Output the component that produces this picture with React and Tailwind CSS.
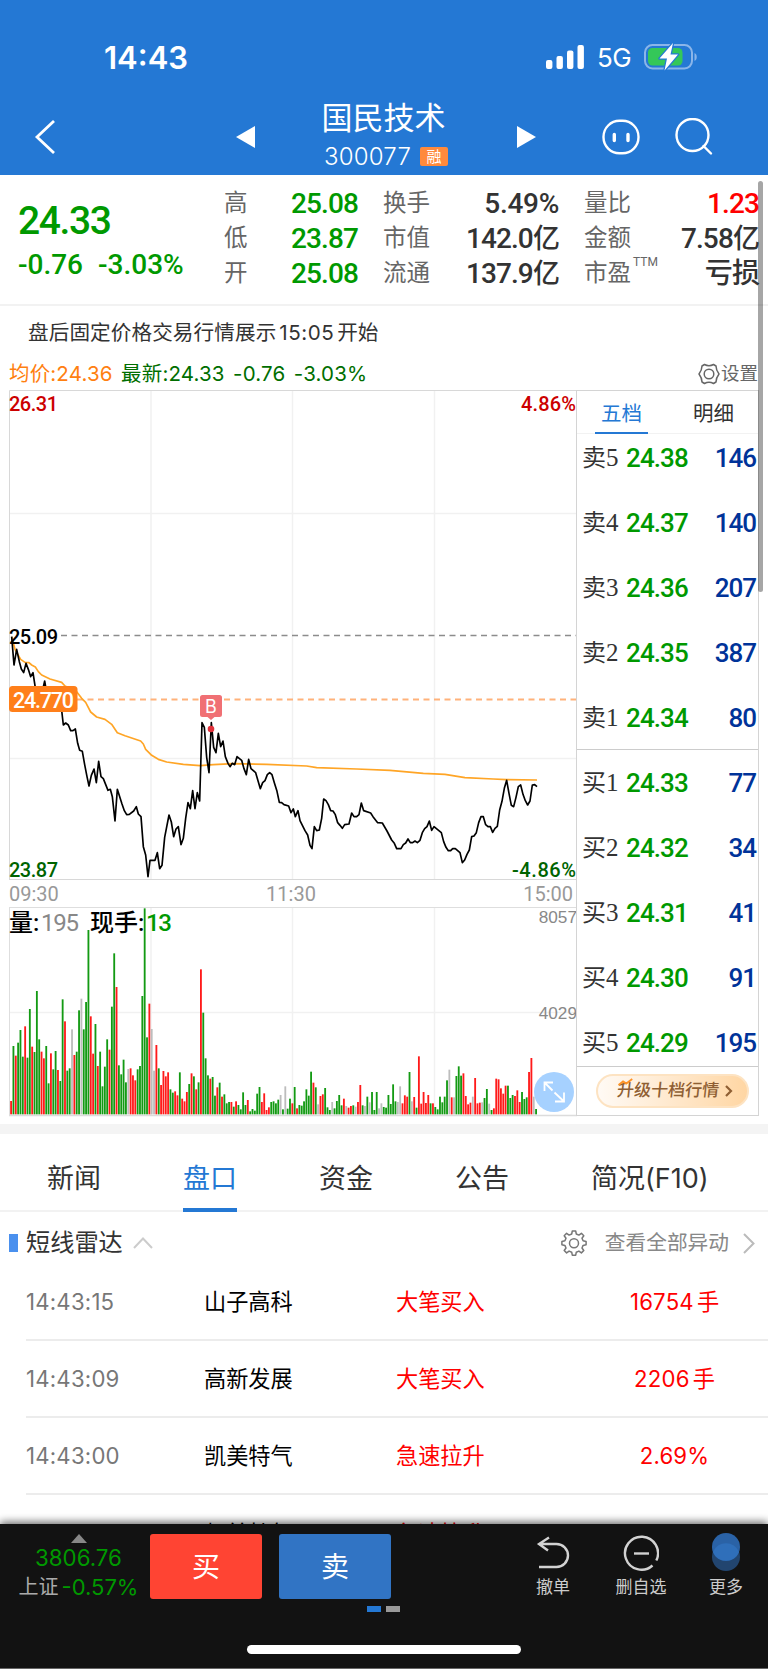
import React, { useState } from 'react';

const STATS = [
  [
    { label: '高', value: '25.08', color: 'text-[#009900]' },
    { label: '低', value: '23.87', color: 'text-[#009900]' },
    { label: '开', value: '25.08', color: 'text-[#009900]' },
  ],
  [
    { label: '换手', value: '5.49%', color: 'text-[#333333]' },
    { label: '市值', value: '142.0亿', color: 'text-[#333333]' },
    { label: '流通', value: '137.9亿', color: 'text-[#333333]' },
  ],
  [
    { label: '量比', value: '1.23', color: 'text-[#ff0000]' },
    { label: '金额', value: '7.58亿', color: 'text-[#333333]' },
    { label: '市盈', sup: 'TTM', value: '亏损', color: 'text-[#333333]' },
  ],
];

const SELL = [
  ['卖', 5, '24.38', 146],
  ['卖', 4, '24.37', 140],
  ['卖', 3, '24.36', 207],
  ['卖', 2, '24.35', 387],
  ['卖', 1, '24.34', 80],
];

const BUY = [
  ['买', 1, '24.33', 77],
  ['买', 2, '24.32', 34],
  ['买', 3, '24.31', 41],
  ['买', 4, '24.30', 91],
  ['买', 5, '24.29', 195],
];

const NEWS_TABS = ['新闻', '盘口', '资金', '公告', '简况(F10)'];

const RADAR = [
  { time: '14:43:15', name: '山子高科', type: '大笔买入', value: '16754', unit: '手' },
  { time: '14:43:09', name: '高新发展', type: '大笔买入', value: '2206', unit: '手' },
  { time: '14:43:00', name: '凯美特气', type: '急速拉升', value: '2.69%', unit: '' },
];

// price and average lines, three units per pixel
const PRICE_AM =
  '35,50 42,135 50,88 58,125 64,147 71,158 78,130 85,148 92,170 99,158 107,210 120,222 128,210 134,183 141,225 150,240 162,236 172,260 184,262 190,315 197,309 205,315 212,332 219,332 226,327 233,370 239,391 247,394 254,434 261,470 267,498 274,466 282,447 289,488 296,424 303,470 310,476 324,511 331,508 337,530 345,603 352,508 366,552 373,572 380,584 388,583 401,573 409,560 415,582 423,590 430,680 437,705 444,770 450,721 465,721 472,698 479,746 486,736 494,652 507,585 514,606 521,650 528,627 535,620 543,674 550,655 557,595 564,548 571,566 578,512 585,566 592,518 599,543 606,308 613,322 620,412 627,458 634,308 641,382 648,398 655,340 662,380 669,363 676,410 684,430 690,440 697,430 704,434 711,410 725,421 732,446 739,464 746,418 753,446 767,458 774,482 781,506 788,488 795,482 802,464 809,458 816,464 823,488 831,514 838,547 845,548 852,554 866,558 873,578 880,567 886,590 894,572';
const PRICE_PM =
  '900,602 915,632 923,645 930,676 936,686 943,620 950,632 958,630 965,595 971,537 978,542 985,554 992,572 999,573 1006,584 1013,608 1020,616 1027,625 1034,614 1047,612 1055,579 1062,590 1070,590 1077,584 1084,549 1091,572 1112,579 1119,590 1133,608 1147,609 1161,633 1175,660 1183,670 1190,686 1203,686 1210,674 1217,669 1224,657 1231,668 1238,668 1245,663 1252,668 1260,661 1267,638 1274,626 1281,620 1288,603 1295,631 1302,620 1324,638 1331,665 1338,682 1345,692 1352,692 1358,686 1366,686 1380,698 1387,728 1394,720 1401,703 1408,690 1415,650 1422,648 1429,638 1436,608 1443,590 1450,590 1457,614 1464,620 1471,620 1478,637 1485,625 1492,619 1499,570 1506,544 1513,505 1520,481 1527,520 1534,556 1541,560 1548,532 1555,500 1562,495 1569,523 1576,542 1583,555 1590,543 1597,495 1604,494 1611,500';
const AVERAGE =
  '35,50 45,88 62,118 75,127 87,128 95,135 106,141 115,155 125,165 150,177 185,187 195,198 230,215 245,235 257,247 272,276 290,291 315,298 335,313 352,338 375,347 422,363 430,372 437,388 455,406 475,418 500,426 550,433 600,437 640,434 700,431 800,433 920,438 950,443 1070,447 1170,451 1270,460 1335,463 1395,473 1480,477 1520,479 1611,480';

// one bar per minute: colour (r up, g down, y flat) and the y of its top
const VOLUME =
  'r633 g468 r497 g458 g420 g500 r409 g503 g357 r470 g486 g303 g448 r485 r505 g468 g580 r490 g538 g483 r540 g573 g328 r394 g542 g535 y418 r495 g485 g361 y326 g418 g336 g120 r379 r491 g402 r528 g485 g589 g530 g448 r479 g350 g190 r291 g526 g553 g509 g577 y537 r535 r556 r571 g538 g528 g318 g55 g442 r341 y417 y542 r465 g535 r585 r543 r559 r547 g598 g608 r604 r616 g547 r626 r634 r606 g582 r550 g559 r598 g577 r238 g368 g505 g556 r566 g561 g617 r592 g578 r620 g613 g640 g636 r636 g650 r634 g645 g658 g607 g645 r630 g664 g657 g662 g611 g591 r636 r610 r660 r652 g636 g634 g640 g629 y615 g658 y589 g656 g626 r640 g591 r655 g645 g647 g634 g598 g617 g545 r578 g592 y643 r618 r613 g594 g652 g660 y636 g655 g633 g615 g646 r626 y648 r653 r648 g646 y650 r636 r585 g646 y648 g620 y637 g606 g660 g606 y655 y640 g651 g653 g615 g642 g583 g634 y636 y589 r640 r616 r620 g546 y634 r621 g653 r499 r641 r606 r639 r615 g640 r640 g651 g658 g620 g637 g620 g571 y539 r622 y622 g558 g529 g557 r550 r618 r643 r638 y620 r564 r640 r638 y637 g624 g597 y641 g660 r655 r566 r568 r595 r611 r587 g587 g624 g615 r618 r601 r636 g606 g627 g622 r546 r504 y620 g657'
    .split(' ')
    .map((s) => ({ color: s[0], top: Number(s.slice(1)) }));

const BAR_COLORS = { r: '#ff1a1a', g: '#139a13', y: '#bdbdbd' };

const StatusBar = () => (
  <div className="flex h-[88px] items-center pt-[26px] pl-[104px] text-white">
    <span className="w-[441px] text-[31px] leading-none font-semibold">14:43</span>
    <svg width="40" height="26" viewBox="0 0 40 26" fill="#fff">
      <rect x="1" y="16" width="6.4" height="9" rx="2" />
      <rect x="11.5" y="12" width="6.4" height="13" rx="2" />
      <rect x="22" y="6.500" width="6.400" height="18.5" rx="2" />
      <rect x="32.5" y="1" width="6.400" height="24" rx="2" />
    </svg>
    <span className="ml-[12px] w-[46px] pt-[2px] text-[26px] leading-none tracking-[-0.6px]">5G</span>
    <svg width="56" height="30" viewBox="0 0 56 30">
      <rect x="2" y="3" width="47" height="23.500" rx="7.5" fill="none" stroke="#8ab5e9" strokeWidth="2" />
      <path d="M51.500 11v8c3-1.200 3-6.800 0-8z" fill="#8ab5e9" />
      <rect x="5" y="6" width="34.500" height="17.500" rx="4.500" fill="#34c759" />
      <path
        d="M30 1L16.500 16.500h7.500L21.500 28.500 35 12.500h-7.500z"
        fill="#fff"
        stroke="#2478d4"
        strokeWidth="2.500"
        strokeLinejoin="round"
        paintOrder="stroke"
      />
    </svg>
  </div>
);

const NavBar = () => (
  <div className="flex h-[87px] items-center pt-2.5 pl-[34px] text-white">
    <svg width="21" height="34" viewBox="0 0 21 34" fill="none" stroke="#fff" strokeWidth="2.800">
      <path d="M20 1L3 17l17 16" />
    </svg>
    <svg className="ml-[181px]" width="19" height="22" viewBox="0 0 19 22">
      <path d="M19 0v22L0 11z" fill="#fff" />
    </svg>
    <div className="flex w-[262px] flex-col items-center">
      <h1 className="mr-[5px] text-[31px] leading-[38px] font-normal">国民技术</h1>
      <div className="flex h-[38px] items-center pt-[2px]">
        <span className="text-[24px] leading-none font-light tracking-[0.2px]">300077</span>
        <span className="ml-[9px] h-[19px] w-[28px] rounded-[2px] bg-[#ff8a3c] text-center text-[15px] leading-[19px]">
          融
        </span>
      </div>
    </div>
    <svg width="19" height="22" viewBox="0 0 19 22">
      <path d="M0 0v22l19-11z" fill="#fff" />
    </svg>
    <svg className="ml-[66px]" width="38" height="36" viewBox="0 0 38 36" fill="none" stroke="#fff">
      <rect x="1.500" y="1.800" width="35" height="32.500" rx="16" strokeWidth="2.400" />
      <path d="M12.300 15.500v6M26 15.500v6" strokeWidth="3.400" strokeLinecap="round" />
    </svg>
    <svg className="ml-[35px]" width="38" height="38" viewBox="0 0 38 38" fill="none" stroke="#fff" strokeWidth="2.400">
      <circle cx="17.500" cy="17" r="16" />
      <path d="M28.500 28l7.500 7.500" strokeLinecap="round" />
    </svg>
  </div>
);

const Quote = () => (
  <section className="flex h-[131px] border-b-2 border-[#f2f2f2] font-['Roboto','Noto_Sans_CJK_SC',sans-serif]">
    <div className="w-[224px] pt-[26px] pl-[18px] text-[#009900]">
      <div className="text-[39px] leading-[40px] font-medium tracking-[-1.4px]">24.33</div>
      <div className="mt-[10px] flex gap-[15px] text-[28px] leading-[28px] font-medium whitespace-nowrap">
        <span>-0.76</span>
        <span>-3.03%</span>
      </div>
    </div>
    {STATS.map((column, i) => (
      <div
        key={i}
        className={`pt-[11px] ${i === 0 ? 'w-[134px]' : i === 1 ? 'ml-[25px] w-[176px]' : 'ml-[25px] w-[175px]'}`}
      >
        {column.map((item) => (
          <div key={item.label} className="flex h-[35px] items-center justify-between whitespace-nowrap">
            <span className="flex text-[23.500px] leading-[35px] text-[#666666]">
              {item.label}
              {item.sup && <sup className="top-[-11px] ml-[2px] text-[12px] leading-[35px]">{item.sup}</sup>}
            </span>
            <span
              className={`text-[28px] leading-[35px] font-medium ${
                item.value.endsWith('%') ? 'tracking-[-0.3px]' : 'tracking-[-0.9px]'
              } ${item.color}`}
            >
              {item.value.replace('亿', '')}
              {item.value.endsWith('亿') && <span className="text-[27px]">亿</span>}
            </span>
          </div>
        ))}
      </div>
    ))}
  </section>
);

const Legend = () => (
  <div className="flex h-[33px] items-center gap-[8.500px] pl-[9px] text-[20.500px] leading-[33px] tracking-[0.15px] whitespace-nowrap">
    <span className="text-[#ff8010]">均价:24.36</span>
    <span className="text-[#006e00]">最新:24.33</span>
    <span className="text-[#006e00]">-0.76</span>
    <span className="text-[#006e00]">-3.03%</span>
    <button className="mr-[10px] ml-auto flex items-center text-[18.500px] tracking-normal text-[#666666]">
      <svg width="22" height="22" viewBox="0 0 22 22" fill="none" stroke="#666" strokeWidth="1.500">
        <path
          d="M6.500 1.500Q11 4 15.500 1.500L18 3Q18 7 21 11Q18 15 18 19L15.500 20.500Q11 18 6.500 20.500L4 19Q4 15 1 11Q4 7 4 3Z"
          strokeLinejoin="round"
        />
        <circle cx="11" cy="11" r="4.800" />
      </svg>
      <span className="ml-px">设置</span>
    </button>
  </div>
);

const PriceChart = () => (
  <svg
    className="block overflow-visible font-['Roboto','Noto_Sans_CJK_SC',sans-serif]"
    width="568"
    height="490"
    viewBox="0 0 568 490"
    fontSize="20"
    fontWeight="500"
  >
    <path d="M142 0v489M283.500 0v489M425.500 0v489M0 123.500h568M0 368.500h568" stroke="#f1f1f1" strokeWidth="1.500" />
    <path d="M.5 490V.5h567" stroke="#d8d8d8" fill="none" />
    <path d="M0 489.500h568" stroke="#d8d8d8" />
    <path d="M52 245.500h516" stroke="#8c8c8c" strokeWidth="1.500" strokeDasharray="6 4.500" />
    <path d="M68 309.500h500" stroke="#ffb27a" strokeWidth="2" strokeDasharray="6 4.500" />
    <g transform="translate(-9 230) scale(.33333)" fill="none" strokeLinejoin="round">
      <polyline points={AVERAGE} stroke="#ffa526" strokeWidth="5" />
      <polyline points={`${PRICE_AM} ${PRICE_PM}`} stroke="#000" strokeWidth="5" />
    </g>
    <text x="0" y="20.500" fill="#cc0000" textLength="49">26.31</text>
    <text x="512" y="20.500" fill="#cc0000" textLength="55">4.86%</text>
    <text x="0" y="253.500" fill="#000" textLength="49">25.09</text>
    <text x="0" y="486.500" fill="#006400" textLength="49">23.87</text>
    <text x="503" y="486.500" fill="#006400" textLength="64">-4.86%</text>
    <rect x="0" y="296" width="68.500" height="26" rx="3.500" fill="#ff7f1a" />
    <text x="4" y="317.500" fill="#fff" fontSize="21.500" textLength="61">24.770</text>
    <path d="M193.500 305h17a2.500 2.500 0 0 1 2.500 2.500v17a2.500 2.500 0 0 1-2.500 2.500h-5l-3.500 3-3.500-3h-5a2.500 2.500 0 0 1-2.500-2.500v-17a2.500 2.500 0 0 1 2.500-2.500z" fill="#f07074" />
    <text x="202" y="323" fill="#fff" fontFamily="Inter" fontWeight="400" fontSize="18" textAnchor="middle">B</text>
    <circle cx="202" cy="339" r="3.300" fill="#e0303a" />
  </svg>
);

const VolumeChart = () => {
  const step = 1575 / (VOLUME.length - 1);
  return (
    <svg className="block overflow-visible" width="568" height="210" viewBox="0 0 568 210">
      <path d="M142 0v208M283.500 0v208M425.500 0v208M0 105.500h568" stroke="#f1f1f1" strokeWidth="1.500" />
      <path d="M.5 0v209M0 .5h568" stroke="#dedede" />
      <path d="M0 208.500h568" stroke="#dcdcdc" strokeWidth="1.500" />
      <g className="font-['Roboto','Noto_Sans_CJK_SC',sans-serif]" fontSize="24" fontWeight="500">
        <text x="0" y="23.500">量:</text>
        <text x="32" y="23.500" fill="#888888" fontWeight="400" textLength="38">195</text>
        <text x="81" y="23.500">现手:</text>
        <text x="137" y="23.500" fill="#009900" textLength="26">13</text>
      </g>
      <g transform="translate(-9 -17) scale(.33333)">
        {VOLUME.map((bar, i) => (
          <rect
            key={i}
            x={30.5 + i * step}
            y={bar.top}
            width="5.500"
            height={673 - bar.top}
            fill={BAR_COLORS[bar.color]}
          />
        ))}
      </g>
      <g className="font-['Liberation_Sans',sans-serif]" fontSize="17.200" fill="#888888" textAnchor="end">
        <text x="568" y="16">8057</text>
        <text x="568" y="112">4029</text>
      </g>
      <circle cx="545" cy="185" r="20" fill="#a6d1ff" />
      <path
        d="M535.500 184v-8.500h8.500M535.500 175.500l8 8M545.500 185.500l9 8.500M555 185.500v9h-9"
        fill="none"
        stroke="#fff"
        strokeWidth="1.800"
      />
    </svg>
  );
};

const OrderRow = ({ row }) => {
  const [side, level, price, qty] = row;
  return (
    <div className="flex h-[65px] items-center pr-[2px] pl-[5px] font-['Roboto','Noto_Sans_CJK_SC',sans-serif] whitespace-nowrap">
      <span className="w-[44px] text-[24px] leading-[30px] text-[#333333]">
        {side}
        <span className="font-['Liberation_Serif',serif] text-[25px]">{level}</span>
      </span>
      <span className="text-[26px] leading-[30px] font-medium tracking-[-0.9px] text-[#009900]">{price}</span>
      <span className="ml-auto text-[26px] leading-[30px] font-medium tracking-[-1px] text-[#003399]">{qty}</span>
    </div>
  );
};

const OrderBook = () => {
  const [tab, setTab] = useState('五档');
  return (
    <aside className="flex h-[726px] w-[183px] flex-col border border-[#d4d4d4]">
      <div className="flex h-[43px] border-b border-[#f2f2f2] pl-[18px]">
        {['五档', '明细'].map((name) => (
          <button
            key={name}
            onClick={() => setTab(name)}
            className={`mr-[39px] h-[43px] w-[53px] shrink-0 border-b-2 pt-[5px] text-[20.500px] whitespace-nowrap ${
              tab === name ? 'border-[#2478d4] text-[#2478d4]' : 'border-transparent text-[#333333]'
            }`}
          >
            {name}
          </button>
        ))}
      </div>
      <div className="mt-[-9px] h-[324px]">
        {SELL.map((row) => (
          <OrderRow key={row[1]} row={row} />
        ))}
      </div>
      <div className="h-[318px] border-y border-[#cccccc]">
        {BUY.map((row) => (
          <OrderRow key={row[1]} row={row} />
        ))}
      </div>
      <button className="mt-[7px] ml-[19px] flex h-[34px] w-[153px] items-center justify-center rounded-full border-2 border-[#fde3c2] bg-linear-to-r from-[#fffaf5] to-[#ffd6a3] pl-[5px] text-[17px] font-medium whitespace-nowrap text-[#8f5f33]">
        <span className="relative -skew-x-6">
          升级十档行情
          <svg className="absolute top-0 left-0" width="15" height="8" viewBox="0 0 15 8" fill="none" stroke="#ff9326" strokeWidth="2">
            <path d="M1 7l4-3.500 3.500 2L14 1" />
          </svg>
        </span>
        <svg className="ml-[6px]" width="8" height="12" viewBox="0 0 8 12" fill="none" stroke="#8f5f33" strokeWidth="2.200">
          <path d="M1 1l5 5-5 5" />
        </svg>
      </button>
    </aside>
  );
};

const Radar = () => (
  <section className="h-[312px] overflow-hidden">
    <div className="flex h-[52px] items-center pt-[10px] pl-[9px]">
      <span className="h-[18px] w-[9px] bg-[#4a90ee]" />
      <h2 className="ml-[8px] text-[24.200px] leading-[40px] text-[#333333]">短线雷达</h2>
      <svg className="ml-[10px]" width="20" height="12" viewBox="0 0 20 12" fill="none" stroke="#ccc" strokeWidth="2">
        <path d="M1 11l9-9.500L19 11" />
      </svg>
      <svg className="ml-auto" width="26" height="26" viewBox="0 0 26 26" fill="none" stroke="#777" strokeWidth="1.500">
        <path
          d="M11.300 1h3.400l.6 3 2.600 1.100 2.500-1.800 2.400 2.400-1.800 2.500 1.100 2.600 3 .6v3.400l-3 .6-1.100 2.600 1.800 2.500-2.400 2.400-2.500-1.800-2.600 1.100-.6 3h-3.400l-.6-3-2.600-1.100-2.500 1.800-2.400-2.400 1.800-2.500-1.100-2.600-3-.6v-3.400l3-.6 1.100-2.600-1.800-2.500 2.400-2.400 2.500 1.800L10.700 4z"
          strokeLinejoin="round"
        />
        <circle cx="13" cy="13.300" r="4.500" />
      </svg>
      <span className="ml-[18px] text-[20.700px] leading-[40px] text-[#888888]">查看全部异动</span>
      <svg className="mr-[13px] ml-[14px]" width="12" height="21" viewBox="0 0 12 21" fill="none" stroke="#bbb" strokeWidth="2">
        <path d="M1 1l9.500 9.500L1 20" />
      </svg>
    </div>
    {RADAR.map((item) => (
      <div
        key={item.time}
        className="ml-[26px] flex h-[77px] items-center border-b-2 border-[#ececec] text-[22.200px] whitespace-nowrap"
      >
        <span className="w-[178px] tracking-[0.2px] text-[#777777]">{item.time}</span>
        <span className="w-[192px] text-black">{item.name}</span>
        <span className="w-[188px] text-[#ff0000]">{item.type}</span>
        <span className="w-[181px] text-center text-[#ff0000]">
          <span className="tracking-[0.2px]">{item.value}</span>
          {item.unit && <span className="ml-[3px]">{item.unit}</span>}
        </span>
      </div>
    ))}
    <div className="ml-[26px] flex h-[77px] text-[22.200px] leading-[77px] whitespace-nowrap">
      <span className="w-[178px] text-[#777777]" />
      <span className="w-[192px] text-black">凯美特气</span>
      <span className="text-[#ff0000]">急速拉升</span>
    </div>
  </section>
);

const BottomBar = () => (
  <footer className="relative flex h-[145px] flex-col border-b border-[#666666] bg-[#121212] shadow-[0_-2px_8px_rgba(0,0,0,0.6)]">
    <div className="flex h-[82px] pt-[10px]">
      <div className="flex w-[150px] flex-col items-center pl-[7px]">
        <svg width="16" height="9" viewBox="0 0 16 9">
          <path d="M8 0l8 9H0z" fill="#888" />
        </svg>
        <span className="text-[22.300px] leading-[30px] text-[#009900]">3806.76</span>
        <span className="flex text-[22px] leading-[29px] whitespace-nowrap text-[#009900]">
          <span className="mr-[3px] text-[20px] text-[#aaaaaa]">上证</span>-0.57%
        </span>
      </div>
      <button className="h-[65px] w-[112px] rounded-[3px] bg-[#ff4433] pt-[1px] text-[28px] text-white">买</button>
      <button className="ml-[17px] h-[65px] w-[112px] rounded-[3px] bg-[#3174c4] pt-[1px] text-[28px] text-white">卖</button>
      <div className="ml-[128px] flex w-[68px] flex-col items-center text-[17px] text-[#cccccc]">
        <svg width="34" height="37" viewBox="0 0 34 37" fill="none" stroke="#d2d2d2" strokeWidth="2.400">
          <path d="M13 3.500L3 10l9 6.500M3 10h17.500a11.300 11.300 0 0 1 0 23H3" />
        </svg>
        <span className="mt-[6px] leading-[20px]">撤单</span>
      </div>
      <div className="ml-[20px] flex w-[68px] flex-col items-center text-[17px] text-[#cccccc]">
        <svg width="36" height="37" viewBox="0 0 36 37" fill="none" stroke="#d2d2d2" strokeWidth="2.400">
          <path d="M33.300 26.500A16.500 16.500 0 1 0 29.500 31.500" />
          <path d="M11 19.500h15" />
        </svg>
        <span className="mt-[6px] leading-[20px]">删自选</span>
      </div>
      <div className="ml-[17px] flex w-[68px] flex-col items-center text-[17px] text-[#cccccc]">
        <svg className="mt-[-1px]" width="28" height="38" viewBox="0 0 28 38">
          <circle cx="14" cy="24" r="14" fill="#22456f" />
          <circle cx="14" cy="14" r="14" fill="#2a62a6" />
          <path d="M1 19a14 14 0 0 1 26 0 14 14 0 0 1-26 0z" fill="#2f6fba" />
        </svg>
        <span className="mt-[6px] leading-[20px]">更多</span>
      </div>
    </div>
    <div className="flex justify-center gap-[5px] pr-[2px]">
      <span className="h-[6px] w-[14px] bg-[#2478d4]" />
      <span className="h-[6px] w-[14px] bg-[#999999]" />
    </div>
    <div className="mx-auto mt-[33px] h-[9px] w-[274px] rounded-full bg-white" />
  </footer>
);

export default function App() {
  const [active, setActive] = useState('盘口');

  return (
    <div className="relative h-[1669px] w-[768px] overflow-hidden bg-white font-['Inter','Noto_Sans_CJK_SC',sans-serif]">
      <header className="h-[175px] bg-[#2478d4]">
        <StatusBar />
        <NavBar />
      </header>

      <Quote />
      <p className="h-[51px] pl-[28px] text-[20.600px] leading-[53px] tracking-[0.1px] text-[#333333]">
        盘后固定价格交易行情展示<span className="mx-[3px] tracking-[0.5px]">15:05</span>开始
      </p>
      <Legend />

      <main className="flex h-[744px] pl-[9px]">
        <div className="w-[567px]">
          <PriceChart />
          <div className="flex h-[27px] items-center justify-between pt-[2px] pr-[3px] font-['Roboto',sans-serif] text-[20px] leading-[25px] text-[#999999]">
            <span>09:30</span>
            <span>11:30</span>
            <span>15:00</span>
          </div>
          <VolumeChart />
        </div>
        <OrderBook />
      </main>

      <nav className="flex h-[78px] border-b-2 border-[#f2f2f2] pl-[47px] shadow-[0_-10px_0_#f4f4f4]">
        {NEWS_TABS.map((name) => (
          <button
            key={name}
            onClick={() => setActive(name)}
            className={`mr-[82px] h-[78px] shrink-0 border-b-4 pt-[15px] text-[27px] leading-[40px] whitespace-nowrap ${
              active === name ? 'border-[#2478d4] text-[#2478d4]' : 'border-transparent text-[#333333]'
            }`}
          >
            {name}
          </button>
        ))}
      </nav>

      <Radar />
      <BottomBar />

      {/* page scroll indicator */}
      <div className="absolute top-[181px] right-[5px] h-[411px] w-[5px] rounded-full bg-black/35" />
    </div>
  );
}
